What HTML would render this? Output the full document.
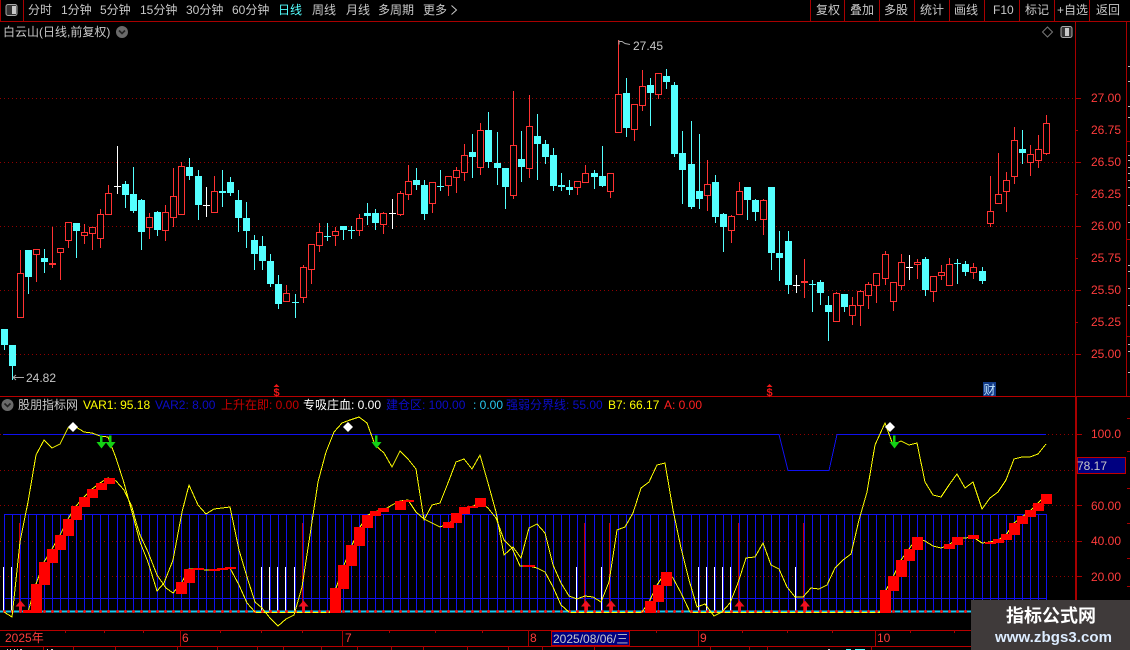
<!DOCTYPE html>
<html><head><meta charset="utf-8"><title>白云山</title>
<style>
html,body{margin:0;padding:0;background:#000;width:1130px;height:650px;overflow:hidden}
svg{display:block;font-family:"Liberation Sans","WenQuanYi Zen Hei","Noto Sans CJK SC",sans-serif;font-size:12px}
.t{fill:#c8c8c8}.a{fill:#ff3c3c}
</style></head><body>
<svg width="1130" height="650" viewBox="0 0 1130 650" xmlns="http://www.w3.org/2000/svg">
<rect width="1130" height="650" fill="#000"/>
<!-- frame -->
<g stroke="#a80000" fill="none" shape-rendering="crispEdges">
<path d="M0 21.5H1130M0.5 0V21M23.5 0V21M810.5 0V21M844.5 0V21M879.5 0V21M914.5 0V21M949.5 0V21M984.5 0V21M1019.5 0V21M1054.5 0V21M1089.5 0V21"/>
<path d="M1075.5 21V646M1126.5 21V397"/>
<path d="M0 396.5H1130M0 630.5H1075M0 646.5H1075" stroke="#b80000"/>
<path d="M1076.5 397V646" />
<path d="M1075 98.5h6M1075 162.5h6M1075 226.5h6M1075 290.5h6M1075 354.5h6M1075 130.5h3M1075 194.5h3M1075 258.5h3M1075 322.5h3M1075 434.5h7M1075 505.5h7M1075 541.5h7M1075 576.5h7M1126 141.5h4M1126 239.5h4M1126 336.5h4M1127 418.5h3M1127 451.5h3M1127 488.5h3M1127 523.5h3M1127 558.5h3M1127 586.5h3"/>
<path d="M180.5 630V646M342.5 630V646M528.5 630V646M698.5 630V646M875.5 630V646"/>
<path d="M65.5 630v3M104.5 630v3M143.5 630v3M220.5 630v3M261.5 630v3M302.5 630v3M389.5 630v3M435.5 630v3M482.5 630v3M656.5 630v3M742.5 630v3M787.5 630v3M832.5 630v3M910.5 630v3M954.5 630v3"/>
<path d="M43.5 646v4M73.5 646v4M115.5 646v4M177.5 646v4M217.5 646v4M257.5 646v4M283.5 646v4M321.5 646v4M357.5 646v4M391.5 646v4M423.5 646v4M467.5 646v4M508.5 646v4M542.5 646v4M594.5 646v4M710.5 646v4M749.5 646v4M767.5 646v4M871.5 646v4"/>
</g>
<path d="M7 649.500h1M10 649.500h1M14 649.500h1M17 649.500h1M20 649.500h2M47 649.500h1M51 649.500h2M828 649.500h2" stroke="#c8c8c8" shape-rendering="crispEdges"/>
<path d="M846 649.500h5M855 649.500h10" stroke="#54ffff" shape-rendering="crispEdges"/>
<path d="M1128 66.5h2M1128 81.5h2M1128 106.5h2M1128 117.5h2M1128 155.5h2M1128 160.5h2M1128 167.5h2M1128 173.5h2M1128 180.5h2M1128 187.5h2M1128 205.5h2M1128 222.5h2M1128 265.5h2M1128 271.5h2M1128 288.5h2M1128 305.5h2M1128 344.5h2M1128 351.5h2M1128 372.5h2" stroke="#bbb" shape-rendering="crispEdges"/>
<!-- dotted grid -->
<path d="M0 98.5H1075M0 162.5H1075M0 226.5H1075M0 290.5H1075M0 354.5H1075M0 434.5H1075M0 470.5H1075M0 505.5H1075M0 541.5H1075M0 576.5H1075" stroke="#900000" stroke-dasharray="1 3" shape-rendering="crispEdges"/>
<!-- toolbar -->
<rect x="6" y="4.5" width="11" height="11" rx="2" fill="#333" stroke="#a8a8a8"/><rect x="12" y="6" width="4" height="8" fill="#c8c8c8"/>
<g class="t">
<text x="28" y="14">分时</text><text x="61" y="14">1分钟</text><text x="100" y="14">5分钟</text><text x="140" y="14">15分钟</text><text x="186" y="14">30分钟</text><text x="232" y="14">60分钟</text>
<text x="278" y="14" style="fill:#54ffff">日线</text><text x="312" y="14">周线</text><text x="346" y="14">月线</text><text x="378" y="14">多周期</text><text x="423" y="14">更多</text>
<text x="816" y="14">复权</text><text x="850" y="14">叠加</text><text x="884" y="14">多股</text><text x="920" y="14">统计</text><text x="954" y="14">画线</text><text x="993" y="14">F10</text><text x="1025" y="14">标记</text><text x="1057" y="14">+自选</text><text x="1096" y="14">返回</text>
<text x="3" y="36">白云山(日线,前复权)</text>
</g>
<path d="M451.5 5.5l5 4.5l-5 4.5" fill="none" stroke="#c8c8c8"/>
<circle cx="122" cy="32" r="6" fill="#6a6a6a"/><path d="M119 30.5l3 3l3-3" fill="none" stroke="#222" stroke-width="1.6"/>
<path d="M1047.5 27l5 5l-5 5l-5-5z" fill="none" stroke="#777"/>
<rect x="1061" y="26.5" width="11" height="11" rx="2" fill="#333" stroke="#a8a8a8"/><rect x="1065" y="28" width="4" height="8" fill="#c8c8c8"/>
<!-- candles: cyan -->
<g shape-rendering="crispEdges" fill="none">
<path stroke="#54ffff" d="M4.5 329V350M12.5 345V380M28.5 250V294M44.5 249V273M76.5 223V258M125.5 181V208M133.5 167V213M141.5 199V250M157.5 211V236M189.5 158V180M198.5 170V220M222.5 170V207M230.5 177V196M238.5 190V232M246.5 202V248M254.5 235V270M262.5 236V270M270.5 254V287M278.5 275V309M295.5 294V318M327.5 223V241M343.5 226V240M351.5 226V239M367.5 203V225M375.5 209V230M416.5 168V190M424.5 180V220M440.5 170V191M472.5 134V178M488.5 112V168M497.5 132V185M505.5 168V209M521.5 131V182M537.5 114V180M545.5 140V164M553.5 148V191M561.5 173V191M569.5 180V195M594.5 170V189M602.5 146V187M626.5 78V137M650.5 78V126M666.5 69V89M674.5 82V157M682.5 131V204M691.5 121V209M699.5 134V209M715.5 175V223M723.5 213V252M747.5 187V220M755.5 199V221M771.5 187V270M779.5 231V281M788.5 231V294M812.5 280V312M820.5 280V305M828.5 296V341M844.5 294V312M925.5 257V296M957.5 259V284M965.5 261V276M982.5 267V284M1022.5 130V164"/>
<path stroke="#54ffff" stroke-width="7" d="M4.5 329V345M12.5 345V366M28.5 250V277M44.5 258V262M76.5 223V231M125.5 184V195M133.5 194V211M141.5 200V232M157.5 212V230M189.5 167V176M198.5 176V205M222.5 191V193M230.5 182V193M238.5 200V218M246.5 218V231M254.5 240V254M262.5 246V261M270.5 261V284M278.5 284V304M295.5 302V303M327.5 236V237M343.5 226V230M351.5 230V231M367.5 213V216M375.5 213V223M416.5 180V185M424.5 185V214M440.5 186V187M472.5 152V157M488.5 130V162M497.5 163V168M505.5 168V187M521.5 159V167M537.5 136V144M545.5 144V157M553.5 155V186M561.5 185V187M569.5 187V190M594.5 173V177M602.5 176V186M626.5 93V128M650.5 85V93M666.5 76V82M674.5 85V154M682.5 153V170M691.5 164V207M699.5 191V199M715.5 182V217M723.5 214V227M747.5 187V200M755.5 200V212M771.5 187V253M779.5 253V258M788.5 241V285M812.5 284V285M820.5 282V293M828.5 305V312M844.5 294V307M925.5 259V290M957.5 263V264M965.5 264V272M982.5 271V281M1022.5 149V153"/>
<!-- white doji -->
<path stroke="#fff" d="M117.5 146V194M114 186.5h7M206.5 187V217M203 205.5h7M392.5 199V229M389 213.5h7M796.5 275V293M793 285.5h7M909.5 255V280M906 267.5h7"/>
<!-- red wicks -->
<path stroke="#ff3232" d="M20.5 250V317M36.5 249V282M52.5 227V268M60.5 248V280M68.5 222V248M84.5 224V244M92.5 227V250M100.5 209V248M108.5 185V214M149.5 213V239M165.5 205V241M173.5 168V227M181.5 162V214M214.5 176V212M286.5 285V302M303.5 265V303M311.5 244V284M319.5 223V252M335.5 227V246M359.5 214V236M383.5 212V234M400.5 191V216M408.5 165V200M432.5 182V213M448.5 176V196M456.5 167V193M464.5 144V181M480.5 123V175M513.5 91V199M529.5 95V178M577.5 181V195M585.5 165V183M610.5 173V198M618.5 40V132M634.5 104V141M642.5 70V111M658.5 73V99M707.5 160V211M731.5 215V243M739.5 182V214M763.5 199V235M804.5 259V298M836.5 292V321M852.5 297V325M860.5 290V326M868.5 282V309M876.5 273V303M885.5 251V285M893.5 282V311M901.5 254V290M917.5 259V279M933.5 276V302M941.5 265V280M949.5 258V285M973.5 263V279M990.5 176V227M998.5 153V204M1006.5 172V212M1014.5 127V184M1030.5 145V176M1038.5 135V168M1046.5 115V155"/>
<!-- red bodies -->
<path stroke="#ff3232" fill="#000" d="M17.5 273.5h6V317.5h-6zM33.5 249.5h6V254.5h-6zM57.5 248.5h6V252.5h-6zM65.5 222.5h6V240.5h-6zM81.5 232.5h6V235.5h-6zM89.5 227.5h6V233.5h-6zM97.5 214.5h6V238.5h-6zM105.5 193.5h6V214.5h-6zM146.5 217.5h6V227.5h-6zM162.5 212.5h6V230.5h-6zM170.5 196.5h6V217.5h-6zM178.5 166.5h6V214.5h-6zM211.5 191.5h6V212.5h-6zM283.5 293.5h6V301.5h-6zM300.5 267.5h6V297.5h-6zM308.5 244.5h6V269.5h-6zM316.5 232.5h6V245.5h-6zM332.5 231.5h6V235.5h-6zM356.5 218.5h6V230.5h-6zM380.5 213.5h6V224.5h-6zM397.5 193.5h6V214.5h-6zM405.5 181.5h6V194.5h-6zM429.5 182.5h6V203.5h-6zM445.5 176.5h6V185.5h-6zM453.5 170.5h6V177.5h-6zM461.5 155.5h6V172.5h-6zM477.5 130.5h6V167.5h-6zM510.5 145.5h6V195.5h-6zM526.5 126.5h6V168.5h-6zM574.5 181.5h6V187.5h-6zM582.5 173.5h6V182.5h-6zM607.5 173.5h6V191.5h-6zM615.5 94.5h6V132.5h-6zM631.5 104.5h6V129.5h-6zM639.5 86.5h6V105.5h-6zM655.5 73.5h6V94.5h-6zM704.5 184.5h6V195.5h-6zM728.5 216.5h6V230.5h-6zM736.5 191.5h6V214.5h-6zM760.5 200.5h6V219.5h-6zM833.5 293.5h6V321.5h-6zM849.5 305.5h6V315.5h-6zM857.5 291.5h6V305.5h-6zM865.5 284.5h6V295.5h-6zM873.5 273.5h6V285.5h-6zM882.5 254.5h6V278.5h-6zM890.5 282.5h6V301.5h-6zM898.5 262.5h6V285.5h-6zM914.5 262.5h6V264.5h-6zM930.5 276.5h6V291.5h-6zM938.5 272.5h6V275.5h-6zM946.5 264.5h6V285.5h-6zM970.5 267.5h6V272.5h-6zM987.5 211.5h6V223.5h-6zM995.5 194.5h6V203.5h-6zM1003.5 180.5h6V191.5h-6zM1011.5 140.5h6V176.5h-6zM1027.5 154.5h6V162.5h-6zM1035.5 149.5h6V160.5h-6zM1043.5 123.5h6V153.5h-6z"/>
<path stroke="#ff3232" stroke-width="2" d="M49 264h7M801 282h7"/>
</g>
<!-- price labels -->
<g class="a">
<text x="1091" y="102">27.00</text><text x="1091" y="134">26.75</text><text x="1091" y="166">26.50</text><text x="1091" y="198">26.25</text><text x="1091" y="230">26.00</text><text x="1091" y="262">25.75</text><text x="1091" y="294">25.50</text><text x="1091" y="326">25.25</text><text x="1091" y="358">25.00</text>
<text x="1091" y="438">100.0</text><text x="1091" y="510">60.00</text><text x="1091" y="545">40.00</text><text x="1091" y="581">20.00</text>
<text x="5" y="642">2025年</text><text x="182" y="642">6</text><text x="345" y="642">7</text><text x="530" y="642">8</text><text x="700" y="642">9</text><text x="877" y="642">10</text>
</g>
<text class="t" x="26" y="382">24.82</text>
<path d="M24 377.5H13M16 375l-3 2.5l3 2.5" fill="none" stroke="#aaa"/>
<text class="t" x="633" y="50">27.45</text>
<path d="M619 41.5h3l3 2l5 1" fill="none" stroke="#aaa"/><path d="M619 40.5v4" stroke="#aaa"/>
<!-- event markers -->
<g fill="#f01818" font-weight="bold">
<path d="M276.5 384l-3 3h6z"/><text x="273.5" y="396" font-size="11">$</text>
<path d="M769.5 384l-3 3h6z"/><text x="766.5" y="396" font-size="11">$</text>
</g>
<rect x="983" y="382" width="13" height="14" fill="#123a86"/>
<text x="983.5" y="394" style="fill:#bfe4ff">财</text>
<!-- indicator legend -->
<circle cx="7.5" cy="405" r="6" fill="#6a6a6a"/><path d="M4.5 403.5l3 3l3-3" fill="none" stroke="#222" stroke-width="1.6"/>
<text x="18" y="409" class="t">股朋指标网</text>
<text x="83" y="409" fill="#ffff00">VAR1: 95.18</text>
<text x="155" y="409" fill="#0c0cc8">VAR2: 8.00</text>
<text x="221" y="409" fill="#c80000">上升在即: 0.00</text>
<text x="303" y="409" fill="#fff">专吸庄血: 0.00</text>
<text x="386" y="409" fill="#0c0cc8">建仓区: 100.00</text>
<text x="473" y="409" fill="#28c8f0">: 0.00</text>
<text x="506" y="409" fill="#0c0cc8">强弱分界线: 55.00</text>
<text x="608" y="409" fill="#ffff00">B7: 66.17</text>
<text x="664" y="409" fill="#ff2020">A: 0.00</text>
<!-- blue -->
<g fill="none" stroke="#1010f0" shape-rendering="crispEdges">
<path d="M3 434.5H779L788 470.5H829L837 434.5H1046"/>
<path d="M4 514.5H1046M4 598.5H1046"/>
<path d="M4.5 514V611M12.5 514V611M20.5 514V611M28.5 514V611M36.5 514V611M44.5 514V611M52.5 514V611M60.5 514V611M68.5 514V611M76.5 514V611M84.5 514V611M92.5 514V611M100.5 514V611M108.5 514V611M117.5 514V611M125.5 514V611M133.5 514V611M141.5 514V611M149.5 514V611M157.5 514V611M165.5 514V611M173.5 514V611M181.5 514V611M189.5 514V611M198.5 514V611M206.5 514V611M214.5 514V611M222.5 514V611M230.5 514V611M238.5 514V611M246.5 514V611M254.5 514V611M262.5 514V611M270.5 514V611M278.5 514V611M286.5 514V611M295.5 514V611M303.5 514V611M311.5 514V611M319.5 514V611M327.5 514V611M335.5 514V611M343.5 514V611M351.5 514V611M359.5 514V611M367.5 514V611M375.5 514V611M383.5 514V611M392.5 514V611M400.5 514V611M408.5 514V611M416.5 514V611M424.5 514V611M432.5 514V611M440.5 514V611M448.5 514V611M456.5 514V611M464.5 514V611M472.5 514V611M480.5 514V611M488.5 514V611M497.5 514V611M505.5 514V611M513.5 514V611M521.5 514V611M529.5 514V611M537.5 514V611M545.5 514V611M553.5 514V611M561.5 514V611M569.5 514V611M577.5 514V611M585.5 514V611M594.5 514V611M602.5 514V611M610.5 514V611M618.5 514V611M626.5 514V611M634.5 514V611M642.5 514V611M650.5 514V611M658.5 514V611M666.5 514V611M674.5 514V611M682.5 514V611M691.5 514V611M699.5 514V611M707.5 514V611M715.5 514V611M723.5 514V611M731.5 514V611M739.5 514V611M747.5 514V611M755.5 514V611M763.5 514V611M771.5 514V611M779.5 514V611M788.5 514V611M796.5 514V611M804.5 514V611M812.5 514V611M820.5 514V611M828.5 514V611M836.5 514V611M844.5 514V611M852.5 514V611M860.5 514V611M868.5 514V611M876.5 514V611M885.5 514V611M893.5 514V611M901.5 514V611M909.5 514V611M917.5 514V611M925.5 514V611M933.5 514V611M941.5 514V611M949.5 514V611M957.5 514V611M965.5 514V611M973.5 514V611M982.5 514V611M990.5 514V611M998.5 514V611M1006.5 514V611M1014.5 514V611M1022.5 514V611M1030.5 514V611M1038.5 514V611M1046.5 514V611"/>
</g>
<!-- white bars -->
<path stroke="#fff" shape-rendering="crispEdges" d="M3.5 567V611M11.5 567V611M261.5 567V611M269.5 567V611M277.5 567V611M285.5 567V611M294.5 567V611M576.5 567V611M601.5 567V611M698.5 567V611M706.5 567V611M714.5 567V611M722.5 567V611M730.5 567V611M795.5 567V611"/>
<!-- red verticals + arrows -->
<path stroke="#c80000" shape-rendering="crispEdges" d="M19.5 523V611M302.5 523V611M584.5 523V611M609.5 523V611M738.5 523V611M803.5 523V611"/>
<g fill="#f01020"><path d="M20.5 600.5l5 6h-10z"/><path d="M303.5 600.5l5 6h-10z"/><path d="M586 600.5l5 6h-10z"/><path d="M611 600.5l5 6h-10z"/><path d="M739.5 600.5l5 6h-10z"/><path d="M805 600.5l5 6h-10z"/>
<path d="M19 606h3v5h-3zM302 606h3v5h-3zM585 606h3v5h-3zM610 606h3v5h-3zM738 606h3v5h-3zM804 606h3v5h-3z"/></g>
<!-- baseline -->
<path d="M0 611.5H1075" stroke="#19c8f0" stroke-width="2" shape-rendering="crispEdges"/>
<path d="M255 612.5H330M569 612.5H642M690 612.5H880" stroke="#ffff00" shape-rendering="crispEdges"/>
<path stroke="#f01818" stroke-width="3" stroke-linecap="round" d="M4.5 611.5h0M12.5 611.5h0M20.5 611.5h0M28.5 611.5h0M36.5 611.5h0M44.5 611.5h0M52.5 611.5h0M60.5 611.5h0M68.5 611.5h0M76.5 611.5h0M84.5 611.5h0M92.5 611.5h0M100.5 611.5h0M108.5 611.5h0M117.5 611.5h0M125.5 611.5h0M133.5 611.5h0M141.5 611.5h0M149.5 611.5h0M157.5 611.5h0M165.5 611.5h0M173.5 611.5h0M181.5 611.5h0M189.5 611.5h0M198.5 611.5h0M206.5 611.5h0M214.5 611.5h0M222.5 611.5h0M230.5 611.5h0M238.5 611.5h0M246.5 611.5h0M254.5 611.5h0M262.5 611.5h0M270.5 611.5h0M278.5 611.5h0M286.5 611.5h0M295.5 611.5h0M303.5 611.5h0M311.5 611.5h0M319.5 611.5h0M327.5 611.5h0M335.5 611.5h0M343.5 611.5h0M351.5 611.5h0M359.5 611.5h0M367.5 611.5h0M375.5 611.5h0M383.5 611.5h0M392.5 611.5h0M400.5 611.5h0M408.5 611.5h0M416.5 611.5h0M424.5 611.5h0M432.5 611.5h0M440.5 611.5h0M448.5 611.5h0M456.5 611.5h0M464.5 611.5h0M472.5 611.5h0M480.5 611.5h0M488.5 611.5h0M497.5 611.5h0M505.5 611.5h0M513.5 611.5h0M521.5 611.5h0M529.5 611.5h0M537.5 611.5h0M545.5 611.5h0M553.5 611.5h0M561.5 611.5h0M569.5 611.5h0M577.5 611.5h0M585.5 611.5h0M594.5 611.5h0M602.5 611.5h0M610.5 611.5h0M618.5 611.5h0M626.5 611.5h0M634.5 611.5h0M642.5 611.5h0M650.5 611.5h0M658.5 611.5h0M666.5 611.5h0M674.5 611.5h0M682.5 611.5h0M691.5 611.5h0M699.5 611.5h0M707.5 611.5h0M715.5 611.5h0M723.5 611.5h0M731.5 611.5h0M739.5 611.5h0M747.5 611.5h0M755.5 611.5h0M763.5 611.5h0M771.5 611.5h0M779.5 611.5h0M788.5 611.5h0M796.5 611.5h0M804.5 611.5h0M812.5 611.5h0M820.5 611.5h0M828.5 611.5h0M836.5 611.5h0M844.5 611.5h0M852.5 611.5h0M860.5 611.5h0M868.5 611.5h0M876.5 611.5h0M885.5 611.5h0M893.5 611.5h0M901.5 611.5h0M909.5 611.5h0M917.5 611.5h0M925.5 611.5h0M933.5 611.5h0M941.5 611.5h0M949.5 611.5h0M957.5 611.5h0M965.5 611.5h0"/>
<!-- yellow lines -->
<g fill="none" stroke="#ffff00" stroke-width="1" stroke-linejoin="round" shape-rendering="crispEdges">
<path d="M4 612L12 617L13 608L20 542L28 502L36 455L44 440L52 448L60 444L68 428L76 427L84 432L92 433L100 436L108 437L116 458L124 483L132 512L140 542L148 562L157 591L164 583L173 560L182 512L189 485L198 505L206 514L214 509L222 508L230 507L239 550L247 577L255 602L262 608L270 618L278 626L286 619L294 615L302 587L310 535L318 482L326 452L334 432L342 423L350 420L359 417L367 423L375 445L384 453L392 467L400 451L408 459L416 469L424 520L432 505L440 503L448 483L456 462L464 459L472 469L480 455L488 483L496 512L504 555L513 547L521 558L529 528L537 524L545 533L553 565L561 583L569 596L577 599L585 596L593 597L601 602L609 582L617 530L625 527L633 513L641 488L649 482L657 465L665 463L673 510L681 548L689 580L697 607L705 604L714 616L722 612L730 603L738 583L746 558L755 557L763 543L771 565L779 569L787 587L795 597L803 597L811 588L819 589L827 585L835 568L843 560L851 554L859 520L867 492L875 445L885 423L893 445L901 441L909 445L917 443L925 482L933 495L941 497L949 485L957 474L965 488L973 482L982 509L990 498L998 492L1006 480L1014 459L1022 457L1030 457L1038 454L1046 444"/>
<path d="M28 612L36 584L44 562L52 549L60 535L68 519L76 506L84 497L92 489L100 483L108 478L116 481L124 490L132 507L136 522L140 535L148 552L157 575L166 588L173 593L182 582L189 569L198 569L206 570L214 570L222 569L230 568L239 585L247 603L255 612"/>
<path d="M330 612L336 588L344 565L352 545L360 527L368 515L377 511L384 510L392 505L400 501L408 500L416 512L424 519L432 523L440 527L448 524L456 518L464 509L472 507L480 502L488 508L496 518L504 540L512 548L520 566L529 566L537 568L545 572L553 587L561 605L569 612"/>
<path d="M642 612L649 602L657 585L665 573L673 578L681 593L690 612"/>
<path d="M880 612L885 592L893 577L901 560L909 549L917 538L925 541L933 546L941 548L949 545L957 538L965 538L973 537L982 543L990 542L998 540L1006 535L1014 523L1022 517L1030 511L1038 503L1046 495"/>
</g>
<!-- red step blocks -->
<path fill="#ff0000" shape-rendering="crispEdges" d="M23 610h11v3h-11zM31 584h11v29h-11zM39 562h11v23h-11zM47 549h11v14h-11zM55 535h11v15h-11zM63 519h11v17h-11zM71 506h11v14h-11zM79 497h11v10h-11zM87 489h11v9h-11zM96 483h11v7h-11zM104 478h11v6h-11zM176 582h11v12h-11zM184 569h11v14h-11zM193 568h11v2h-11zM209 569h11v2h-11zM217 568h11v2h-11zM225 567h11v2h-11zM330 588h11v25h-11zM338 565h11v24h-11zM346 545h11v21h-11zM354 527h11v19h-11zM362 515h11v13h-11zM370 511h11v5h-11zM378 508h11v4h-11zM395 501h11v9h-11zM403 500h11v2h-11zM443 522h11v6h-11zM451 513h11v10h-11zM459 507h11v7h-11zM467 506h11v2h-11zM475 498h11v9h-11zM523 565h12v2h-12zM645 601h11v12h-11zM653 585h11v17h-11zM661 572h11v14h-11zM880 590h11v23h-11zM888 576h11v15h-11zM896 560h11v17h-11zM904 549h11v12h-11zM912 537h11v13h-11zM944 544h11v5h-11zM952 537h11v8h-11zM968 535h11v4h-11zM985 542h11v2h-11zM993 539h11v4h-11zM1001 534h11v6h-11zM1009 523h11v12h-11zM1017 516h11v8h-11zM1025 510h11v7h-11zM1033 503h11v8h-11zM1041 494h11v10h-11z"/>
<!-- diamonds -->
<g fill="#fff"><path d="M73 422l5 5l-5 5l-5-5z"/><path d="M348 422l5 5l-5 5l-5-5z"/><path d="M890 422l5 5l-5 5l-5-5z"/></g>
<!-- green arrows -->
<g fill="#14d214"><path d="M100 435.500h2.500v6.500h4l-5 6.500l-5-6.500h3.500z"/><path d="M109 435.500h2.500v6.500h4l-5 6.500l-5-6.500h3.500z"/><path d="M375 435.500h2.500v6.500h4l-5 6.500l-5-6.500h3.500z"/><path d="M893 435.500h2.500v6.500h4l-5 6.500l-5-6.500h3.500z"/></g>
<!-- value boxes -->
<rect x="1077.500" y="457.500" width="48" height="16" fill="#000080" stroke="#c00000" shape-rendering="crispEdges"/>
<text x="1077" y="470" class="t">78.17</text>
<rect x="551.500" y="631.500" width="78" height="14" fill="#000080" stroke="#c00000" shape-rendering="crispEdges"/>
<text x="553" y="643" class="t">2025/08/06/三</text>
<!-- watermark -->
<rect x="971" y="600" width="159" height="50" fill="#3f3a3a"/>
<text x="1006" y="622" font-size="18" font-weight="bold" fill="#fff" font-family="'Noto Sans CJK SC',sans-serif">指标公式网</text>
<text x="995" y="642" font-size="15" font-weight="bold" fill="#dcecff" textLength="117" lengthAdjust="spacing">www.zbgs3.com</text>
</svg>
</body></html>
